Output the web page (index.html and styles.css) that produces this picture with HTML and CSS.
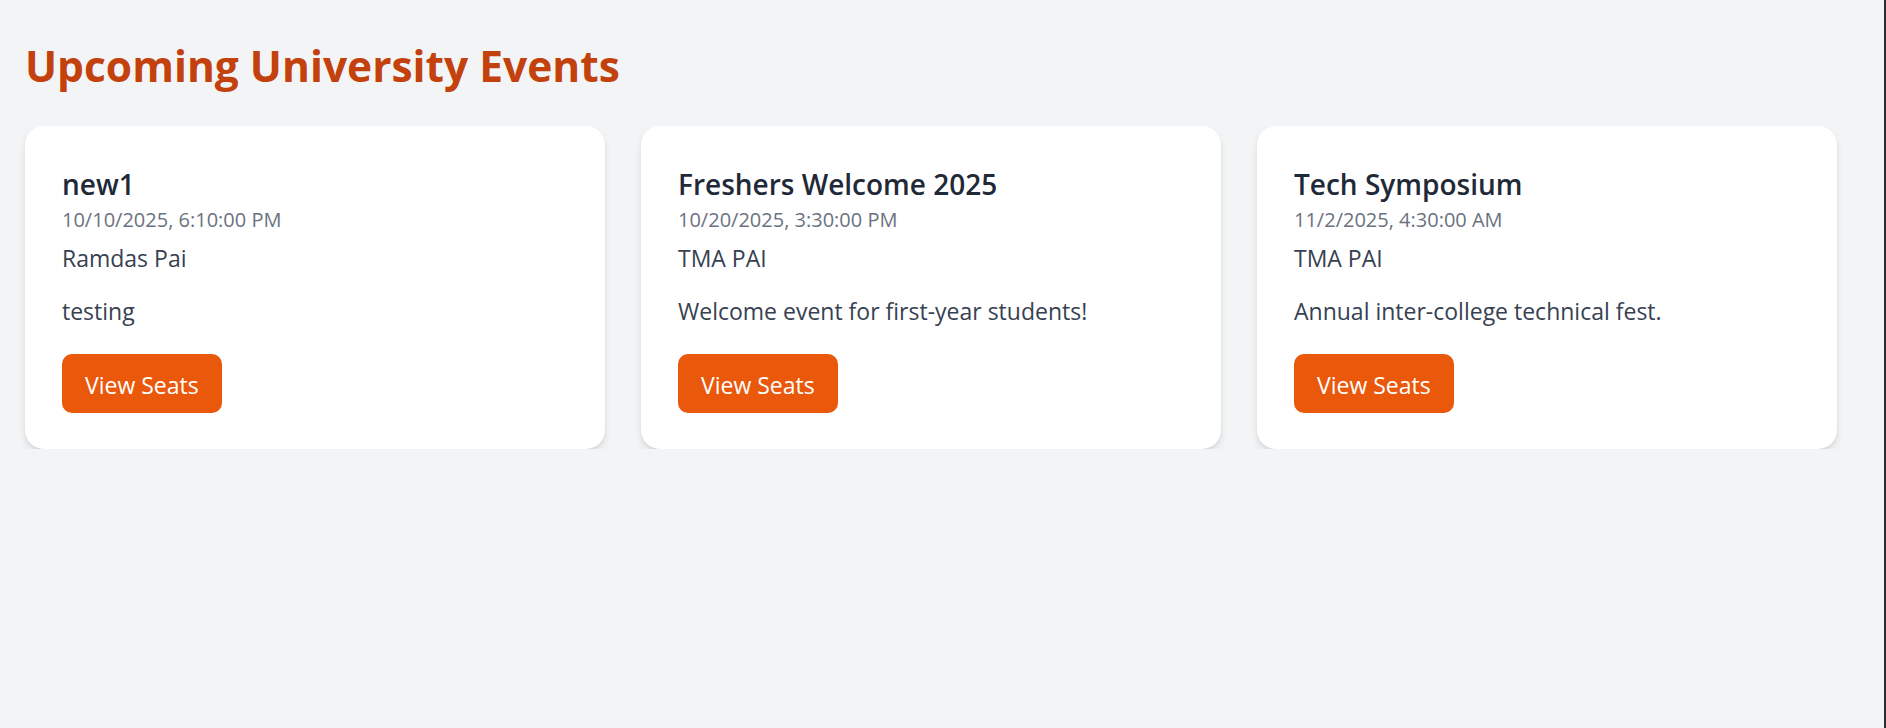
FILE: index.html
```html
<!DOCTYPE html>
<html lang="en">
<head>
<meta charset="utf-8">
<title>Upcoming University Events</title>
<link rel="stylesheet" href="styles.css">
</head>
<body>
<main class="page">
  <h1 class="page-title">Upcoming University Events</h1>
  <section class="event-grid">
    <article class="event-card">
      <h2 class="event-name">new1</h2>
      <p class="event-date">10/10/2025, 6:10:00 PM</p>
      <p class="event-venue">Ramdas Pai</p>
      <p class="event-desc">testing</p>
      <button class="seats-btn" type="button">View Seats</button>
    </article>
    <article class="event-card">
      <h2 class="event-name">Freshers Welcome 2025</h2>
      <p class="event-date">10/20/2025, 3:30:00 PM</p>
      <p class="event-venue">TMA PAI</p>
      <p class="event-desc">Welcome event for first-year students!</p>
      <button class="seats-btn" type="button">View Seats</button>
    </article>
    <article class="event-card">
      <h2 class="event-name">Tech Symposium</h2>
      <p class="event-date">11/2/2025, 4:30:00 AM</p>
      <p class="event-venue">TMA PAI</p>
      <p class="event-desc">Annual inter-college technical fest.</p>
      <button class="seats-btn" type="button">View Seats</button>
    </article>
  </section>
</main>
</body>
</html>
```

FILE: styles.css
```css
html {
  background: #f3f4f6;
  border-right: 2px solid #2d2d2d;
  min-height: 100%;
  box-sizing: border-box;
}
body {
  margin: 0;
  font-family: "Open Sans", "Noto Sans", sans-serif;
  color: #374151;
}
.page {
  padding: 41px 0 0 25px;
}
.page-title {
  margin: 0 0 35px;
  font-size: 42.5px;
  line-height: 50px;
  font-weight: 700;
  color: #c2410c;
}
.event-grid {
  display: grid;
  grid-template-columns: repeat(3, 580px);
  gap: 36px;
}
.event-card {
  background: #fff;
  border-radius: 19px;
  box-shadow: 0 5px 9px -1px rgba(0, 0, 0, 0.11), 0 2px 5px -2px rgba(0, 0, 0, 0.1);
  padding: 40px 37px 36px;
  display: flex;
  flex-direction: column;
  align-items: flex-start;
}
.event-name {
  margin: 0;
  font-size: 28px;
  line-height: 36px;
  font-weight: 600;
  color: #1f2937;
}
.event-date {
  margin: 5px 0 0;
  font-size: 20px;
  line-height: 26px;
  color: #6b7280;
}
.event-venue {
  margin: 10px 0 0;
  font-size: 23px;
  line-height: 30px;
}
.event-desc {
  margin: 23px 0 0;
  font-size: 23px;
  line-height: 30px;
}
.seats-btn {
  margin-top: 28px;
  border: 0;
  border-radius: 10px;
  background: #ea580c;
  color: #fff;
  font-family: inherit;
  font-size: 23px;
  line-height: 30px;
  padding: 16px 23px 13px;
  cursor: pointer;
}
```
